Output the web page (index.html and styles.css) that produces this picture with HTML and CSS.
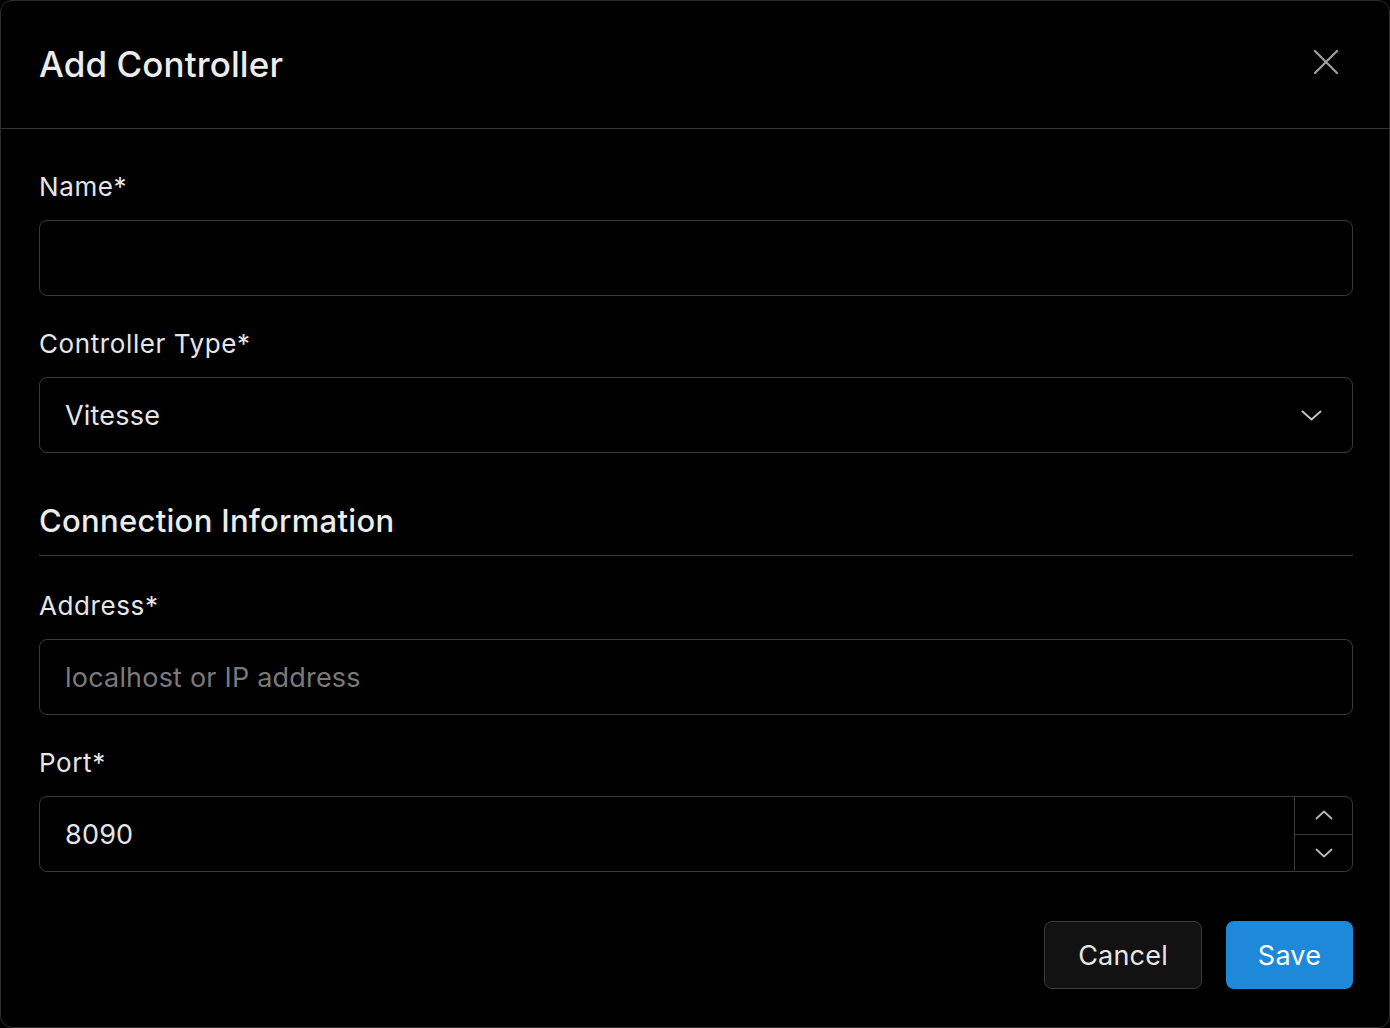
FILE: index.html
```html
<!DOCTYPE html>
<html lang="en">
<head>
<meta charset="utf-8">
<title>Add Controller</title>
<link rel="stylesheet" href="styles.css">
</head>
<body>
<div class="modal">
  <header class="modal-header">
    <h1 class="modal-title">Add Controller</h1>
    <button class="close-btn" aria-label="Close">
      <svg width="24" height="24" viewBox="0 0 24 24"><path d="M1 1 L23 23 M23 1 L1 23" stroke="#a0a0a0" stroke-width="2.2" stroke-linecap="round" fill="none"/></svg>
    </button>
  </header>
  <div class="modal-body">
    <div class="field">
      <label class="label">Name*</label>
      <div class="input"></div>
    </div>
    <div class="field">
      <label class="label">Controller Type*</label>
      <div class="input select">
        <span class="value">Vitesse</span>
        <svg class="chev" width="21" height="11" viewBox="0 0 21 11"><path d="M1.5 1.5 L10.5 9.5 L19.5 1.5" stroke="#c0c0c0" stroke-width="2" stroke-linecap="round" stroke-linejoin="round" fill="none"/></svg>
      </div>
    </div>
    <h2 class="section-title">Connection Information</h2>
    <div class="field">
      <label class="label">Address*</label>
      <div class="input"><span class="placeholder">localhost or IP address</span></div>
    </div>
    <div class="field">
      <label class="label">Port*</label>
      <div class="input number">
        <span class="value num-value">8090</span>
        <div class="spinner">
          <div class="spin-btn">
            <svg width="18" height="10" viewBox="0 0 18 10"><path d="M1.5 8.5 L9 1.5 L16.5 8.5" stroke="#b8b8b8" stroke-width="1.8" stroke-linecap="round" stroke-linejoin="round" fill="none"/></svg>
          </div>
          <div class="spin-btn">
            <svg width="18" height="10" viewBox="0 0 18 10"><path d="M1.5 1.5 L9 8.5 L16.5 1.5" stroke="#b8b8b8" stroke-width="1.8" stroke-linecap="round" stroke-linejoin="round" fill="none"/></svg>
          </div>
        </div>
      </div>
    </div>
    <div class="actions">
      <button class="btn btn-cancel">Cancel</button>
      <button class="btn btn-save">Save</button>
    </div>
  </div>
</div>
</body>
</html>
```
FILE: styles.css
```css
* { box-sizing: border-box; }
html, body {
  margin: 0;
  padding: 0;
  background: #000;
}
body {
  font-family: Inter, "Liberation Sans", sans-serif;
  color: #e6e6e6;
}
.modal {
  width: 1390px;
  height: 1028px;
  border: 1px solid #2c2c2c;
  border-radius: 12px;
  background: #000;
  overflow: hidden;
}
.modal-header {
  height: 128px;
  border-bottom: 1.5px solid #343434;
  display: flex;
  align-items: center;
  justify-content: space-between;
  padding: 0 51px 2px 38px;
}
.modal-title {
  margin: 0;
  font-size: 35px;
  font-weight: 500;
  color: #ececec;
  letter-spacing: 0.1px;
}
.close-btn {
  background: none;
  border: 0;
  padding: 0;
  width: 24px;
  height: 24px;
  display: flex;
  margin-top: -4px;
}
.modal-body {
  padding: 42px 36px 0 38px;
}
.field {
  display: flex;
  flex-direction: column;
  margin-bottom: 32px;
}
.label {
  font-size: 26px;
  line-height: 32px;
  font-weight: 400;
  letter-spacing: 0.6px;
  color: #e6e6e6;
  margin-bottom: 17px;
}
.input {
  height: 76px;
  border: 1.5px solid #3a3a3a;
  border-radius: 8px;
  display: flex;
  align-items: center;
  padding: 0 0 0 25px;
  font-size: 27px;
  letter-spacing: 0.2px;
  color: #e6e6e6;
}
.select {
  justify-content: space-between;
  padding-right: 30px;
}
.placeholder {
  color: #7a7a7a;
}
.number {
  padding-right: 0;
  justify-content: space-between;
  align-items: stretch;
}
.num-value {
  align-self: center;
}
.spinner {
  width: 58px;
  border-left: 1.5px solid #3a3a3a;
  display: flex;
  flex-direction: column;
}
.spin-btn {
  flex: 1;
  display: flex;
  align-items: center;
  justify-content: center;
}
.spin-btn + .spin-btn {
  border-top: 1.5px solid #3a3a3a;
}
.section-title {
  margin: 48px 0 34px;
  font-size: 31px;
  line-height: 40px;
  font-weight: 500;
  letter-spacing: 0.3px;
  color: #ececec;
  padding-bottom: 14px;
  border-bottom: 1.5px solid #3a3a3a;
}
.actions {
  display: flex;
  justify-content: flex-end;
  gap: 24px;
  margin-top: 49px;
}
.btn {
  height: 68px;
  border-radius: 8px;
  font-family: Inter, "Liberation Sans", sans-serif;
  font-size: 27px;
  font-weight: 400;
  letter-spacing: 0.2px;
  padding: 0;
}
.btn-cancel {
  background: #121212;
  border: 1.5px solid #3a3a3a;
  color: #e6e6e6;
  width: 158px;
}
.btn-save {
  background: #1e88d9;
  border: 0;
  color: #fff;
  width: 127px;
}
```
